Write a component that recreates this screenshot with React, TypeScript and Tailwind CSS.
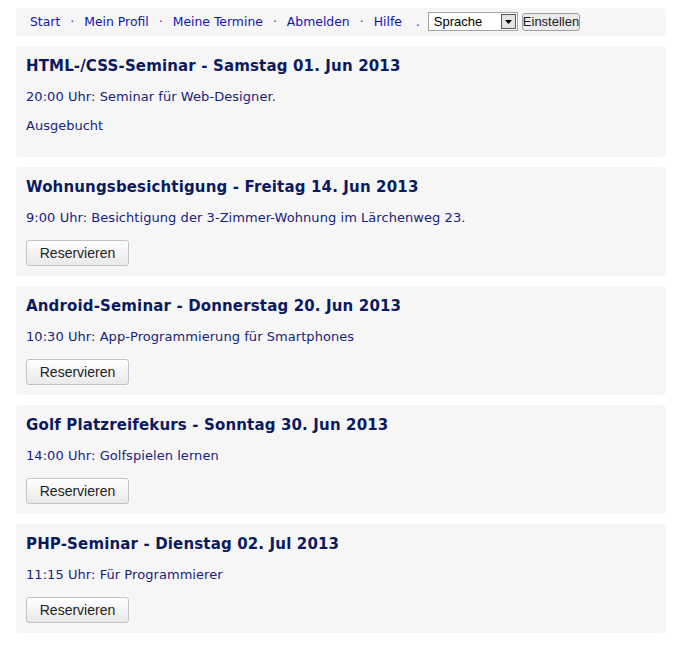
const events = [
  {
    title: "HTML-/CSS-Seminar - Samstag 01. Jun 2013",
    text: "20:00 Uhr: Seminar für Web-Designer.",
    booked: true,
  },
  {
    title: "Wohnungsbesichtigung - Freitag 14. Jun 2013",
    text: "9:00 Uhr: Besichtigung der 3-Zimmer-Wohnung im Lärchenweg 23.",
  },
  {
    title: "Android-Seminar - Donnerstag 20. Jun 2013",
    text: "10:30 Uhr: App-Programmierung für Smartphones",
  },
  {
    title: "Golf Platzreifekurs - Sonntag 30. Jun 2013",
    text: "14:00 Uhr: Golfspielen lernen",
  },
  {
    title: "PHP-Seminar - Dienstag 02. Jul 2013",
    text: "11:15 Uhr: Für Programmierer",
  },
];

const links = ["Start", "Mein Profil", "Meine Termine", "Abmelden", "Hilfe"];

const Dot = () => <span className="w-[24px] text-center text-[#3a3a8a]">·</span>;

export default function App() {
  return (
    <div className="min-h-screen bg-white px-4 pt-2 pb-4 font-['DejaVu_Sans',Verdana,sans-serif]">
      {/* NAV */}
      <nav className="flex items-center h-[28px] rounded bg-[#f6f6f6] pl-[14px] text-[12.4px]">
        {links.map((l, i) => (
          <span key={l} className="flex items-center">
            {i > 0 && <Dot />}
            <a href="#" className="text-[#1414b0] leading-4">
              {l}
            </a>
          </span>
        ))}
        <span className="ml-[14px] mr-[8px] text-[#3a3a8a]">.</span>
        <div className="relative">
          <select className="appearance-none w-[90px] h-[19px] border border-[#a5a5a5] bg-white pl-[5px] text-[13px] leading-4 text-black font-['Liberation_Sans',Arial,sans-serif] outline-none">
            <option>Sprache</option>
          </select>
          <span className="pointer-events-none absolute right-[2px] top-[2px] flex h-[15px] w-[15px] items-center justify-center border border-[#555] bg-[#e4e4e4]">
            <svg width="7" height="4" viewBox="0 0 7 4">
              <path d="M0 0h7L3.5 4z" fill="#000" />
            </svg>
          </span>
        </div>
        <button className="ml-[4px] h-[18px] w-[58px] rounded-[3px] border border-[#a0a0a0] bg-[#ececec] px-0 text-[13px] leading-4 text-[#222] font-['Liberation_Sans',Arial,sans-serif]">
          Einstellen
        </button>
      </nav>

      {/* EVENTS */}
      <div className="mt-[10px] flex flex-col gap-[10px]">
        {events.map((e) => (
          <section key={e.title} className="rounded bg-[#f6f6f6] px-[10px] pt-[10px] pb-[10px]">
            <h2 className="text-[15px] font-bold leading-5 tracking-[0.15px] text-[#0b1a5e]">{e.title}</h2>
            <p className="mt-[13px] text-[13px] leading-4 tracking-[0.06px] text-[#16237c]">{e.text}</p>
            {e.booked ? (
              <p className="mt-[13px] mb-[13px] text-[13px] leading-4 text-[#16237c]">Ausgebucht</p>
            ) : (
              <button className="mt-[14px] h-[26px] w-[103px] rounded-[3px] border border-[#c3c3c3] bg-gradient-to-b from-white to-[#e9e9e9] text-[14px] text-[#222] font-['Liberation_Sans',Arial,sans-serif]">
                Reservieren
              </button>
            )}
          </section>
        ))}
      </div>
    </div>
  );
}
